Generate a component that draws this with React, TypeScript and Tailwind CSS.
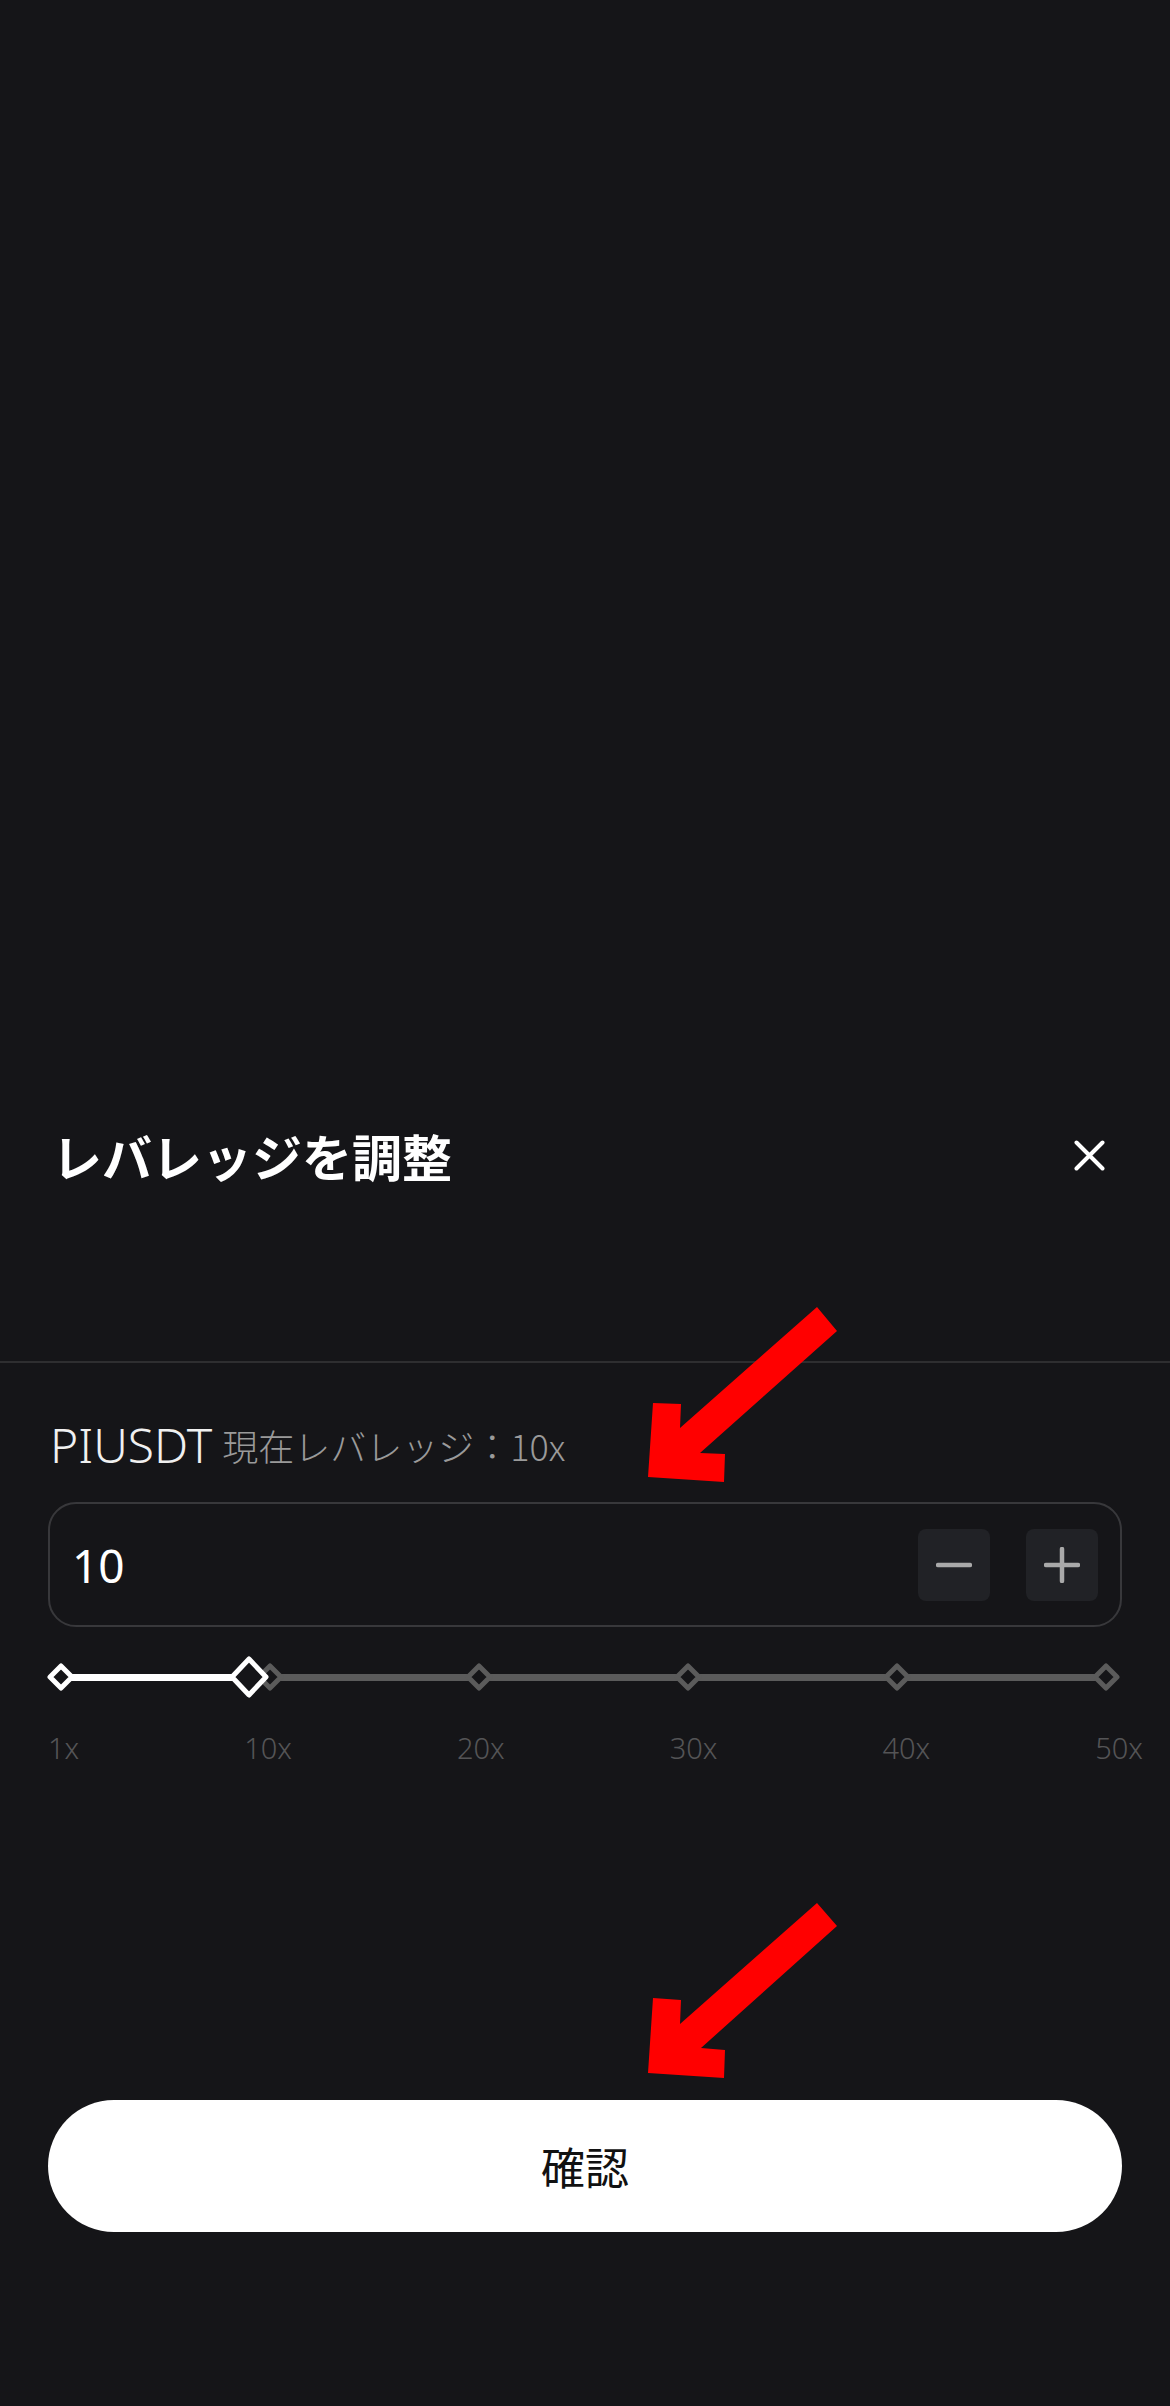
import React from "react";

const ticks = [0, 1, 2, 3, 4, 5];
const labels = ["1x", "10x", "20x", "30x", "40x", "50x"];

function Diamond({ active }: { active?: boolean }) {
  return (
    <svg width="28" height="28" viewBox="0 0 28 28">
      <polygon
        points="14,3 25,14 14,25 3,14"
        fill="#151518"
        stroke={active ? "#ffffff" : "#5b5b5b"}
        strokeWidth="5"
        strokeLinejoin="round"
      />
    </svg>
  );
}

function Thumb() {
  return (
    <svg width="40" height="42" viewBox="0 0 40 42">
      <polygon
        points="20,3 37,21 20,39 3,21"
        fill="#151518"
        stroke="#ffffff"
        strokeWidth="5"
        strokeLinejoin="round"
      />
    </svg>
  );
}

export default function App() {
  // slider: ticks 209px apart starting at 13px, thumb at value 10
  const thumbX = 201;

  return (
    <div
      className="relative h-[2406px] w-[1170px] bg-[#151518] flex flex-col overflow-hidden"
      style={{ fontFamily: '"Noto Sans", "Noto Sans CJK JP", sans-serif' }}
    >
      <div className="h-[1105px]" />

      {/* header */}
      <div className="h-[100px] flex items-center justify-between pl-[52px] pr-[65px]">
        <h1
          className="text-[50px] leading-none font-bold text-white"
          style={{ fontFamily: '"Noto Sans CJK JP", sans-serif' }}
        >
          レバレッジを調整
        </h1>
        <button className="w-[31px] h-[31px]">
          <svg width="31" height="31" viewBox="0 0 31 31">
            <path d="M2.5 2.5 L28.5 28.5 M28.5 2.5 L2.5 28.5" stroke="#ffffff" strokeWidth="4" strokeLinecap="round" />
          </svg>
        </button>
      </div>

      <div className="mt-[156px] h-[2px] bg-[#2e2e30]" />

      {/* symbol row */}
      <div className="mt-[54px] h-[56px] flex items-center pl-[50px]">
        <span className="text-[48px] leading-[56px] font-light text-[#f0f0f0]">PIUSDT</span>
        <span
          className="ml-[10px] text-[36px] leading-[56px] font-light text-[#9a9a9a]"
          style={{ fontFamily: '"Noto Sans CJK JP", sans-serif' }}
        >
          現在レバレッジ：10x
        </span>
      </div>

      {/* input */}
      <div className="mt-[29px] mx-[48px] h-[125px] border-2 border-[#38383b] rounded-[28px] flex items-center justify-between pl-[22px] pr-[22px]">
        <span className="text-[46px] leading-none text-white">10</span>
        <div className="flex items-center gap-[36px]">
          <button className="w-[72px] h-[72px] rounded-[8px] bg-[#212226] flex items-center justify-center">
            <svg width="36" height="36" viewBox="0 0 36 36">
              <path d="M2 18 H34" stroke="#a9a9a9" strokeWidth="4.5" strokeLinecap="round" />
            </svg>
          </button>
          <button className="w-[72px] h-[72px] rounded-[8px] bg-[#212226] flex items-center justify-center">
            <svg width="36" height="36" viewBox="0 0 36 36">
              <path d="M2 18 H34 M18 2 V34" stroke="#a9a9a9" strokeWidth="4.5" strokeLinecap="round" />
            </svg>
          </button>
        </div>
      </div>

      {/* slider */}
      <div className="mt-[28px] mx-[48px] h-[44px] relative">
        <div className="absolute top-[19px] left-[13px] h-[7px] bg-[#5b5b5b]" style={{ width: 1045 }} />
        <div className="absolute top-[19px] left-[13px] h-[7px] bg-white" style={{ width: thumbX - 13 }} />
        {ticks.map((i) => (
          <div key={i} className="absolute top-[8px]" style={{ left: 13 + 209 * i - 14 }}>
            <Diamond active={i === 0} />
          </div>
        ))}
        <div className="absolute top-[1px]" style={{ left: thumbX - 20 }}>
          <Thumb />
        </div>
      </div>

      <div className="mt-[31px] ml-[48px] mr-[27px] h-[36px] flex justify-between items-center">
        {labels.map((l) => (
          <span key={l} className="text-[29px] leading-[36px] font-light text-[#545456]">
            {l}
          </span>
        ))}
      </div>

      {/* confirm */}
      <button
        className="mt-[334px] mx-[48px] h-[132px] rounded-full bg-white text-[44px] text-[#111111] flex items-center justify-center"
        style={{ fontFamily: '"Noto Sans CJK JP", sans-serif' }}
      >
        確認
      </button>

      {/* annotation arrows */}
      <svg className="absolute inset-0 pointer-events-none" width="1170" height="2406" viewBox="0 0 1170 2406">
        <polygon fill="#ff0000" points="648,1477 653,1403 681,1404 680,1428 817,1307 837,1331 700,1453 725,1454 724,1482" />
        <polygon fill="#ff0000" points="648,2073 653,1998 681,2000 680,2024 817,1903 837,1926 701,2048 725,2050 724,2078" />
      </svg>
    </div>
  );
}
